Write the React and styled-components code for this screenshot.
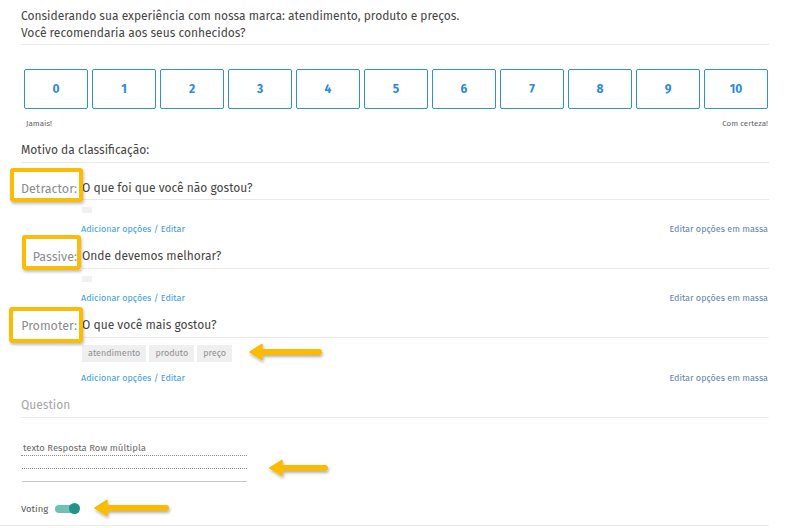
import React from "react";
import styled, { createGlobalStyle } from "styled-components";

const Global = createGlobalStyle`
  html, body { margin: 0; padding: 0; background: #fff; }
  body { font-family: "Fira Sans", Lato, "Open Sans", sans-serif; color: #454545; }
`;

const Page = styled.div`
  position: relative;
  width: 793px;
  height: 528px;
  box-sizing: border-box;
  padding: 8px 24px 0 21px;
  overflow: hidden;
`;

const Title = styled.div`
  font-size: 12px;
  line-height: 17px;
  padding-bottom: 2px;
  border-bottom: 1px solid #e9e9e9;
`;

const Scale = styled.div`
  display: grid;
  grid-template-columns: repeat(11, 1fr);
  gap: 4px;
  margin-top: 24px;
  padding: 0 1px 0 3px;
`;

const ScaleButton = styled.div`
  height: 40px;
  box-sizing: border-box;
  border: 1px solid #2f8fe6;
  border-radius: 2px;
  display: flex;
  align-items: center;
  justify-content: center;
  color: #2b89e2;
  font-size: 12px;
  font-weight: 700;
`;

const ScaleLabels = styled.div`
  display: flex;
  justify-content: space-between;
  margin-top: 10px;
  padding: 0 1px 0 5px;
  font-size: 8px;
  line-height: 10px;
  color: #666;
`;

const Header = styled.div`
  margin-top: 13px;
  font-size: 12px;
  line-height: 17px;
  padding-bottom: 3px;
  border-bottom: 1px solid #e9e9e9;
  color: ${(p) => (p.$muted ? "#a5a5a5" : "#454545")};
`;

const Reason = styled.div`
  display: grid;
  grid-template-columns: 61px 1fr;
`;

const LabelCell = styled.div`
  position: relative;
  text-align: right;
  padding-right: 5px;
  padding-top: ${(p) => p.$top}px;
  font-size: 12.5px;
  line-height: 17px;
  color: #8c8c8c;
`;

const Highlight = styled.div`
  position: absolute;
  left: ${(p) => p.$l}px;
  right: ${(p) => p.$r}px;
  top: ${(p) => p.$t}px;
  height: ${(p) => p.$h}px;
  border: 4px solid #fbbc05;
  border-radius: 3px;
  box-sizing: border-box;
  box-shadow: 1px 2px 3px rgba(0, 0, 0, 0.25);
  pointer-events: none;
`;

const Body = styled.div``;

const QuestionText = styled.div`
  padding-top: ${(p) => p.$top}px;
  padding-bottom: ${(p) => p.$bottom}px;
  font-size: 12px;
  line-height: 17px;
  border-bottom: 1px solid #e9e9e9;
`;

const Tags = styled.div`
  display: flex;
  gap: 3px;
  margin-top: 7px;
`;

const EmptyTag = styled.div`
  width: 10px;
  height: 6px;
  background: #f1f1f1;
`;

const Tag = styled.div`
  height: 17px;
  box-sizing: border-box;
  padding: 0 6px;
  background: #efefef;
  color: #8f8f8f;
  font-size: 9px;
  line-height: 17px;
`;

const Links = styled.div`
  display: flex;
  justify-content: space-between;
  margin-top: 10px;
  margin-left: -1px;
  font-size: 9px;
  line-height: 12px;
  padding-right: 1px;
`;

const Link = styled.span`
  color: ${(p) => (p.$dim ? "#5f82b5" : "#3b9ae8")};
`;

const Inputs = styled.div`
  margin-top: 25px;
  width: 226px;
`;

const InputLine = styled.div`
  height: 13px;
  box-sizing: border-box;
  border-bottom: 1px ${(p) => (p.$solid ? "solid #c8c8c8" : "dotted #8a8a8a")};
  margin-left: ${(p) => p.$ml || 0}px;
  font-size: 9.5px;
  line-height: 11px;
  padding-left: 2px;
  color: #6a6a6a;
`;

const VotingRow = styled.div`
  display: flex;
  align-items: center;
  gap: 7px;
  margin-top: 21px;
  font-size: 9.5px;
  line-height: 12px;
  color: #5a5a5a;
`;

const Toggle = styled.div`
  position: relative;
  width: 24px;
  height: 8px;
  border-radius: 4px;
  background: #70c1b5;
`;

const Knob = styled.div`
  position: absolute;
  right: -1px;
  top: -2px;
  width: 11px;
  height: 11px;
  border-radius: 50%;
  background: #1f9486;
`;

const BottomLine = styled.div`
  position: absolute;
  left: 0;
  right: 24px;
  top: 525px;
  border-top: 1px solid #ececec;
`;

const ArrowSvg = styled.svg`
  position: absolute;
  left: ${(p) => p.$x}px;
  top: ${(p) => p.$y}px;
  overflow: visible;
  pointer-events: none;
`;

function Arrow({ x, y, w }) {
  return (
    <ArrowSvg $x={x} $y={y - 9} width={w} height={18} viewBox={`0 0 ${w} 18`}>
      <defs>
        <filter id={`s${x}`} x="-20%" y="-50%" width="140%" height="200%">
          <feDropShadow dx="1" dy="2" stdDeviation="1.4" floodColor="#000" floodOpacity="0.3" />
        </filter>
      </defs>
      <g filter={`url(#s${x})`}>
        <line x1={10} y1={9} x2={w - 3} y2={9} stroke="#fbbc05" strokeWidth={6} strokeLinecap="round" />
        <path d="M0 9 L12 1.5 L12 16.5 Z" fill="#fbbc05" strokeLinejoin="round" stroke="#fbbc05" strokeWidth="1.5" />
      </g>
    </ArrowSvg>
  );
}

const reasons = [
  {
    label: "Detractor:",
    q: "O que foi que você não gostou?",
    top: 17,
    bottom: 2,
    tags: null,
    box: { l: -11, r: -1, t: 5, h: 34 },
  },
  {
    label: "Passive:",
    q: "Onde devemos melhorar?",
    top: 13,
    bottom: 3,
    tags: null,
    box: { l: 1, r: 1, t: 0, h: 35 },
  },
  {
    label: "Promoter:",
    q: "O que você mais gostou?",
    top: 13,
    bottom: 3,
    tags: ["atendimento", "produto", "preço"],
    box: { l: -12, r: -1, t: 3, h: 36 },
  },
];

export default function App() {
  return (
    <>
      <Global />
      <Page>
        <Title>
          Considerando sua experiência com nossa marca: atendimento, produto e preços.
          <br />
          Você recomendaria aos seus conhecidos?
        </Title>
        <Scale>
          {Array.from({ length: 11 }, (_, i) => (
            <ScaleButton key={i}>{i}</ScaleButton>
          ))}
        </Scale>
        <ScaleLabels>
          <span>Jamais!</span>
          <span>Com certeza!</span>
        </ScaleLabels>
        <Header>Motivo da classificação:</Header>
        {reasons.map((r) => (
          <Reason key={r.label}>
            <LabelCell $top={r.top}>
              {r.label}
              <Highlight $l={r.box.l} $r={r.box.r} $t={r.box.t} $h={r.box.h} />
            </LabelCell>
            <Body>
              <QuestionText $top={r.top} $bottom={r.bottom}>{r.q}</QuestionText>
              <Tags>
                {r.tags ? r.tags.map((t) => <Tag key={t}>{t}</Tag>) : <EmptyTag />}
              </Tags>
              <Links>
                <Link>Adicionar opções / Editar</Link>
                <Link $dim>Editar opções em massa</Link>
              </Links>
            </Body>
          </Reason>
        ))}
        <Header $muted>Question</Header>
        <Inputs>
          <InputLine>texto Resposta Row múltipla</InputLine>
          <InputLine $ml={1} />
          <InputLine $ml={1} $solid />
        </Inputs>
        <VotingRow>
          Voting
          <Toggle>
            <Knob />
          </Toggle>
        </VotingRow>
        <BottomLine />
        <Arrow x={250} y={352} w={72} />
        <Arrow x={270} y={468} w={58} />
        <Arrow x={95} y={508} w={74} />
      </Page>
    </>
  );
}
